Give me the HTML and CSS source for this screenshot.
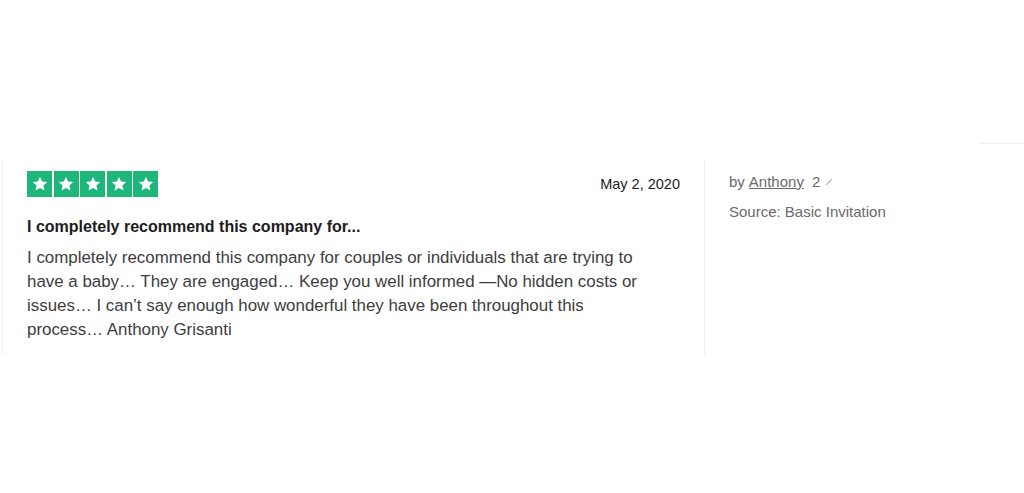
FILE: index.html
```html
<!DOCTYPE html>
<html>
<head>
<meta charset="utf-8">
<link rel="stylesheet" href="styles.css">
</head>
<body>
<div class="page">
  <div class="topline"></div>
  <div class="review">
    <div class="main">
      <div class="head">
        <div class="stars">
          <span class="star"><svg viewBox="0 0 24 24"><path d="M12 3.5l2.6 5.6 6.1.6-4.6 4.1 1.3 6-5.4-3.1-5.4 3.1 1.3-6-4.6-4.1 6.1-.6z"/></svg></span>
          <span class="star"><svg viewBox="0 0 24 24"><path d="M12 3.5l2.6 5.6 6.1.6-4.6 4.1 1.3 6-5.4-3.1-5.4 3.1 1.3-6-4.6-4.1 6.1-.6z"/></svg></span>
          <span class="star"><svg viewBox="0 0 24 24"><path d="M12 3.5l2.6 5.6 6.1.6-4.6 4.1 1.3 6-5.4-3.1-5.4 3.1 1.3-6-4.6-4.1 6.1-.6z"/></svg></span>
          <span class="star"><svg viewBox="0 0 24 24"><path d="M12 3.5l2.6 5.6 6.1.6-4.6 4.1 1.3 6-5.4-3.1-5.4 3.1 1.3-6-4.6-4.1 6.1-.6z"/></svg></span>
          <span class="star"><svg viewBox="0 0 24 24"><path d="M12 3.5l2.6 5.6 6.1.6-4.6 4.1 1.3 6-5.4-3.1-5.4 3.1 1.3-6-4.6-4.1 6.1-.6z"/></svg></span>
        </div>
        <div class="date">May 2, 2020</div>
      </div>
      <h2 class="title">I completely recommend this company for...</h2>
      <p class="body">I completely recommend this company for couples or individuals that are trying to have a baby… They are engaged… Keep you well informed —No hidden costs or issues… I can’t say enough how wonderful they have been throughout this process… Anthony Grisanti</p>
    </div>
    <div class="side">
      <div class="by">by <a class="author">Anthony</a> <span class="count">2</span> <svg class="pen" viewBox="0 0 10 10"><path d="M1.5 8.5l1.2-.3 5.6-5.6-0.9-0.9-5.6 5.6z"/></svg></div>
      <div class="source">Source: Basic Invitation</div>
    </div>
  </div>
</div>
</body>
</html>
```

FILE: styles.css
```css
html, body {
  margin: 0;
  padding: 0;
  background: #fff;
}
body {
  font-family: "Liberation Sans", Arial, sans-serif;
  color: #333;
}
.page {
  width: 1024px;
  height: 493px;
  position: relative;
  padding-top: 160px;
  box-sizing: border-box;
}
.topline {
  position: absolute;
  top: 143px;
  left: 980px;
  width: 44px;
  height: 1px;
  background: #f3f0e8;
}
.review {
  display: flex;
  margin-left: 2px;
  height: 195px;
  border-left: 1px solid #f0f0f0;
}
.main {
  flex: none;
  width: 702px;
  padding: 11px 24px 0 24px;
  border-right: 1px solid #efefef;
  box-sizing: border-box;
}
.head {
  display: flex;
  justify-content: space-between;
  align-items: flex-start;
}
.stars {
  display: flex;
  gap: 1.5px;
}
.star {
  width: 25px;
  height: 26px;
  background: #1db77a;
  display: flex;
  align-items: center;
  justify-content: center;
}
.star svg {
  width: 20px;
  height: 20px;
  fill: #fff;
}
.date {
  font-size: 14.5px;
  color: #222;
  margin-top: 5px;
}
.title {
  font-size: 16px;
  font-weight: bold;
  color: #1c1c1c;
  margin: 20px 0 0 0;
  line-height: 20px;
}
.body {
  font-size: 16.9px;
  line-height: 24px;
  color: #3d3d3d;
  margin: 9px 0 0 0;
  width: 615px;
}
.side {
  padding: 13px 0 0 24px;
  font-size: 15px;
  color: #6a6a6a;
}
.by {
  line-height: 18px;
  display: flex;
  align-items: center;
}
.author {
  text-decoration: underline;
  color: #6a6a6a;
  margin: 0 4px;
}
.count {
  margin-left: 4px;
}
.pen {
  width: 10px;
  height: 10px;
  margin-left: 4px;
  fill: #b5b5b5;
}
.source {
  margin-top: 12px;
  line-height: 18px;
}
```
